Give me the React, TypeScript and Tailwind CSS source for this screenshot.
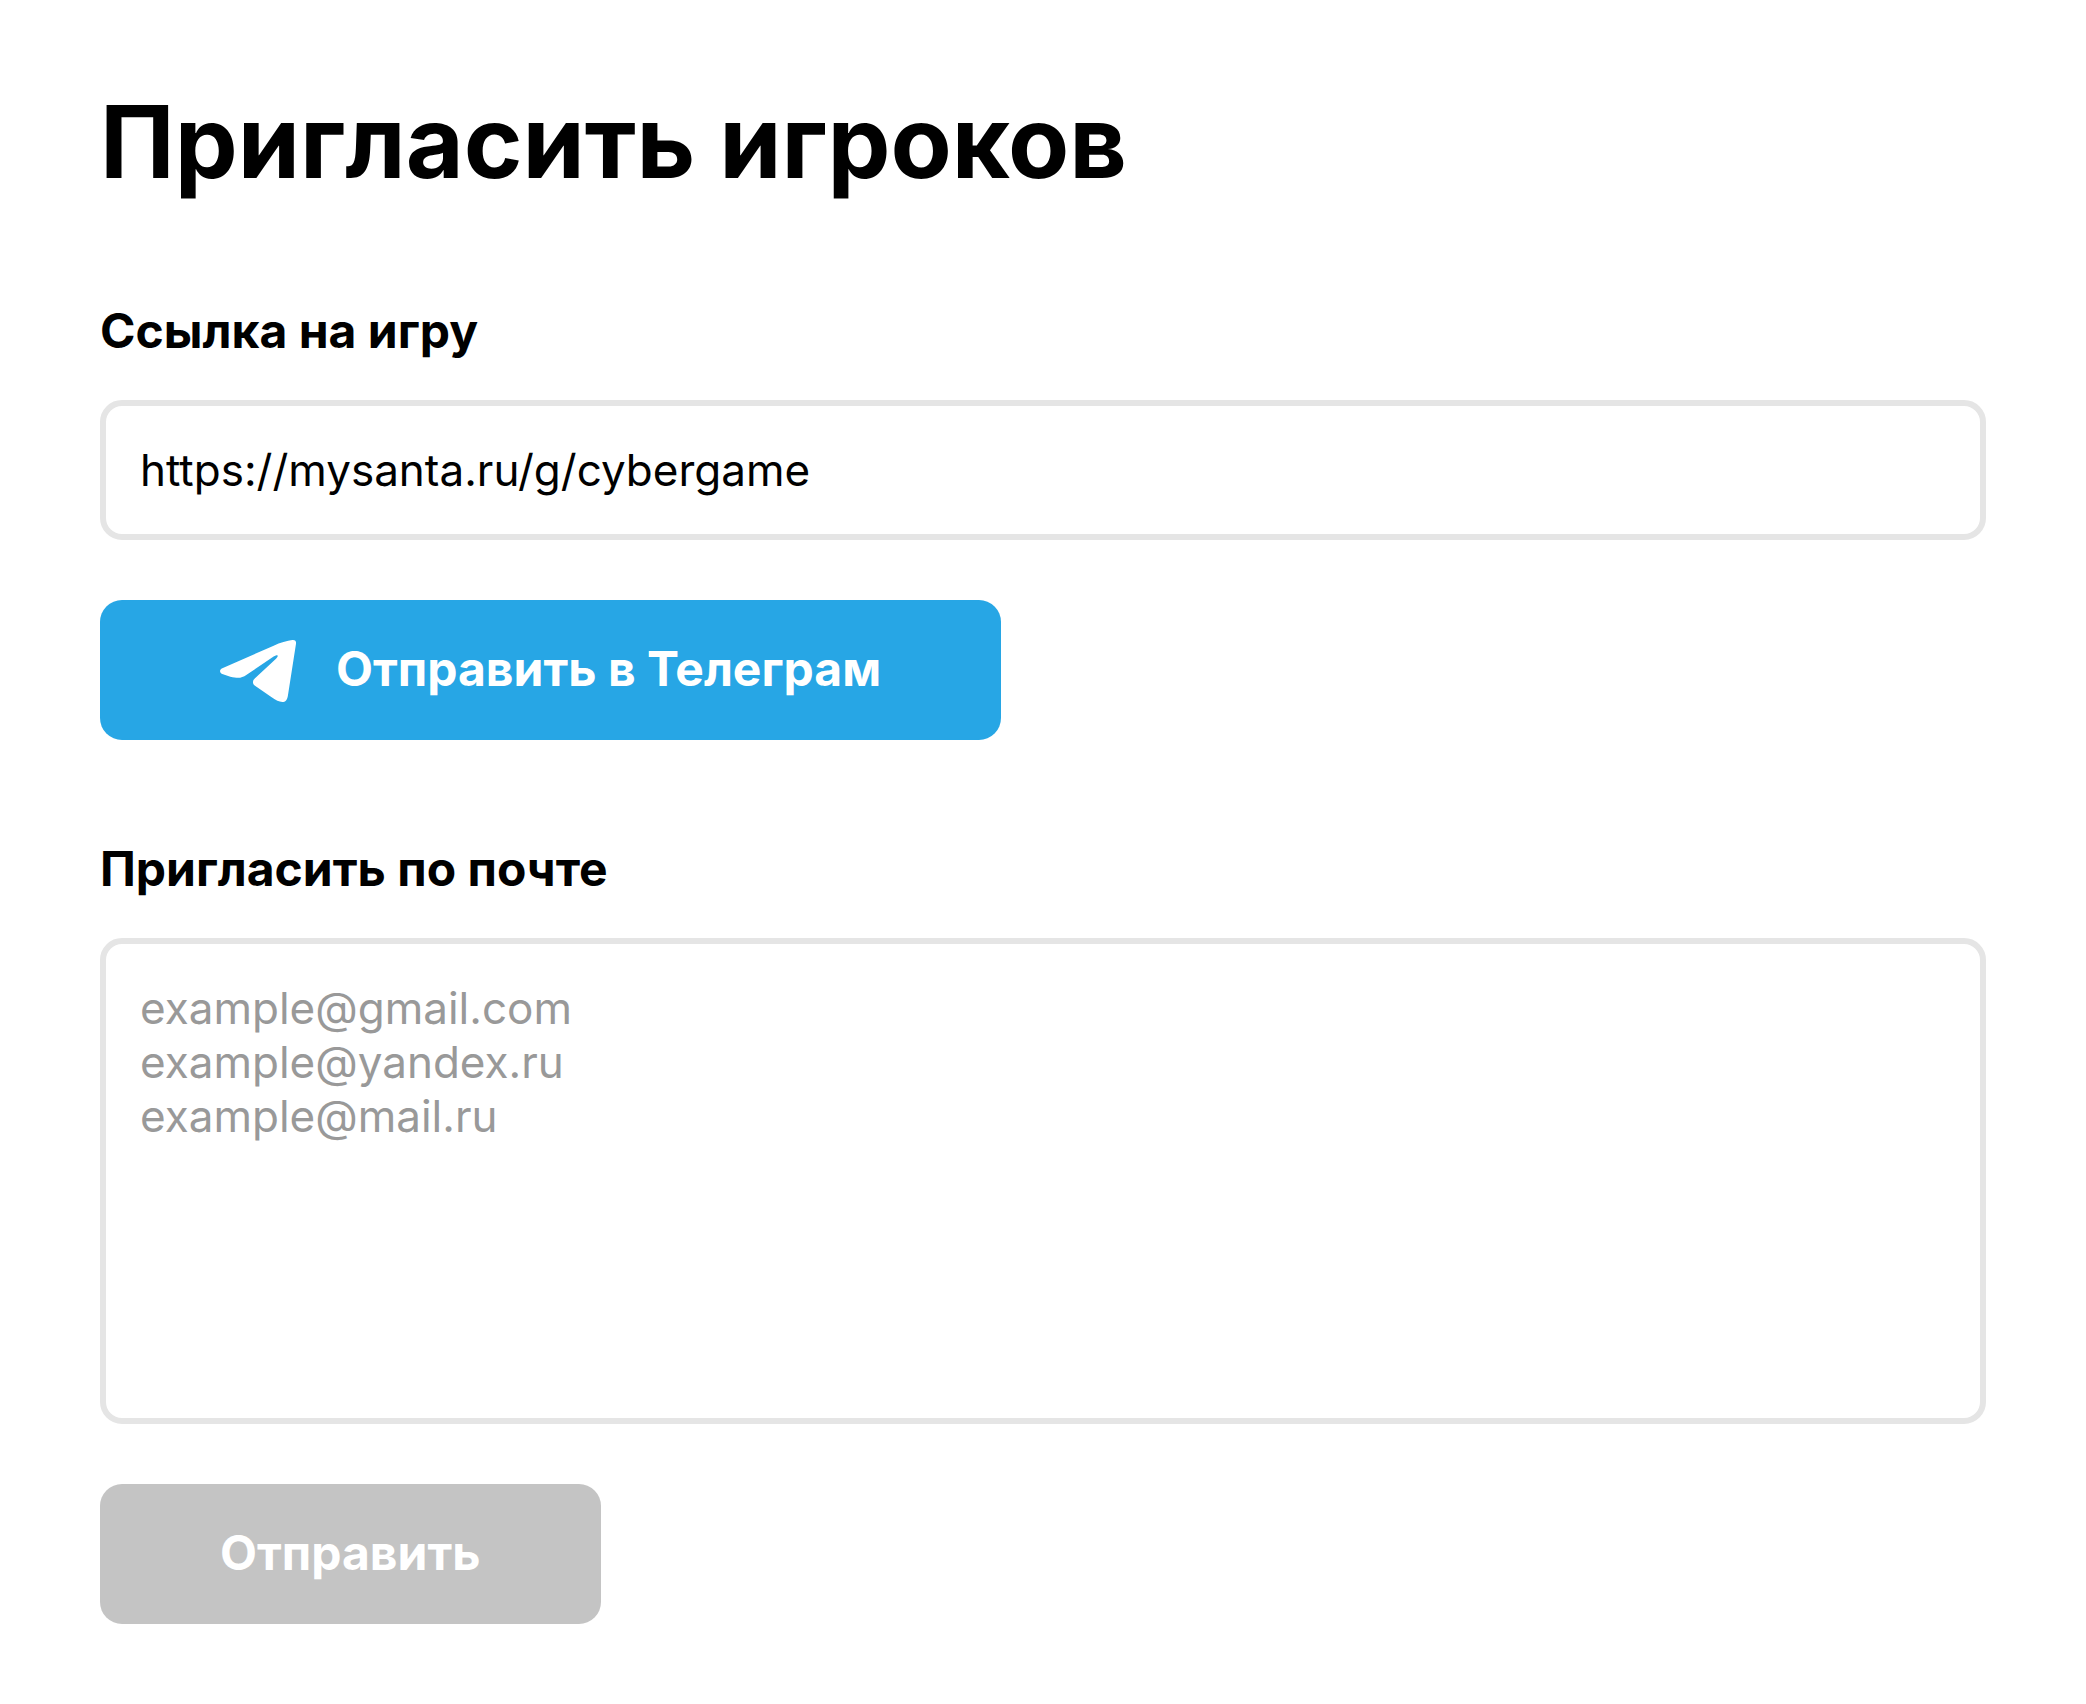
import { useState } from "react";

const labelClass = "mb-10 block text-[48px] leading-[58px] font-bold";

const fieldClass =
  "block w-full rounded-[22px] border-6 border-[#e5e5e5] bg-white px-[34px] text-[44px] leading-[54px] text-black outline-none placeholder:text-[#999999]";

const buttonClass =
  "mt-[60px] flex h-[140px] items-center rounded-[22px] bg-[#27a6e5] px-[120px] pt-[40px] pb-[42px] text-[48px] leading-[58px] font-bold text-white";

export default function App() {
  const [link, setLink] = useState("https://mysanta.ru/g/cybergame");
  const [emails, setEmails] = useState("");

  return (
    <main className="min-h-screen bg-white px-[100px] pt-[82px] pb-20 font-['Inter',sans-serif] text-black">
      <h1 className="text-[100px] leading-[120px] font-bold">
        Пригласить игроков
      </h1>

      <section className="mt-[100px]">
        <label htmlFor="game-link" className={labelClass}>
          Ссылка на игру
        </label>
        <input
          id="game-link"
          type="text"
          value={link}
          onChange={(e) => setLink(e.target.value)}
          className={`${fieldClass} h-[140px]`}
        />
        <button type="button" className={`${buttonClass} gap-10`}>
          <TelegramIcon />
          Отправить в Телеграм
        </button>
      </section>

      <section className="mt-[100px]">
        <label htmlFor="emails" className={labelClass}>
          Пригласить по почте
        </label>
        <textarea
          id="emails"
          value={emails}
          onChange={(e) => setEmails(e.target.value)}
          placeholder={"example@gmail.com\nexample@yandex.ru\nexample@mail.ru"}
          className={`${fieldClass} h-[486px] resize-none py-[37px]`}
        />
        <button
          type="button"
          disabled={!emails}
          className={`${buttonClass} disabled:bg-[#c4c4c4]`}
        >
          Отправить
        </button>
      </section>
    </main>
  );
}

function TelegramIcon() {
  return (
    <svg
      width="76"
      height="66"
      viewBox="0 -12 228 198"
      fill="currentColor"
      aria-hidden="true"
    >
      <path d="M7 85L161 17C180 8 202 2 217 0C225 -1 229 3 228 11L204 165C202 181 196 186 187 186C177 186 168 181 155 172L105 137C97 131 97 122 105 115L168 56C178 46 173 42 162 49L80 104C63 116 53 114 31 110L9 103C-3 98 -2 89 7 85Z" />
    </svg>
  );
}
